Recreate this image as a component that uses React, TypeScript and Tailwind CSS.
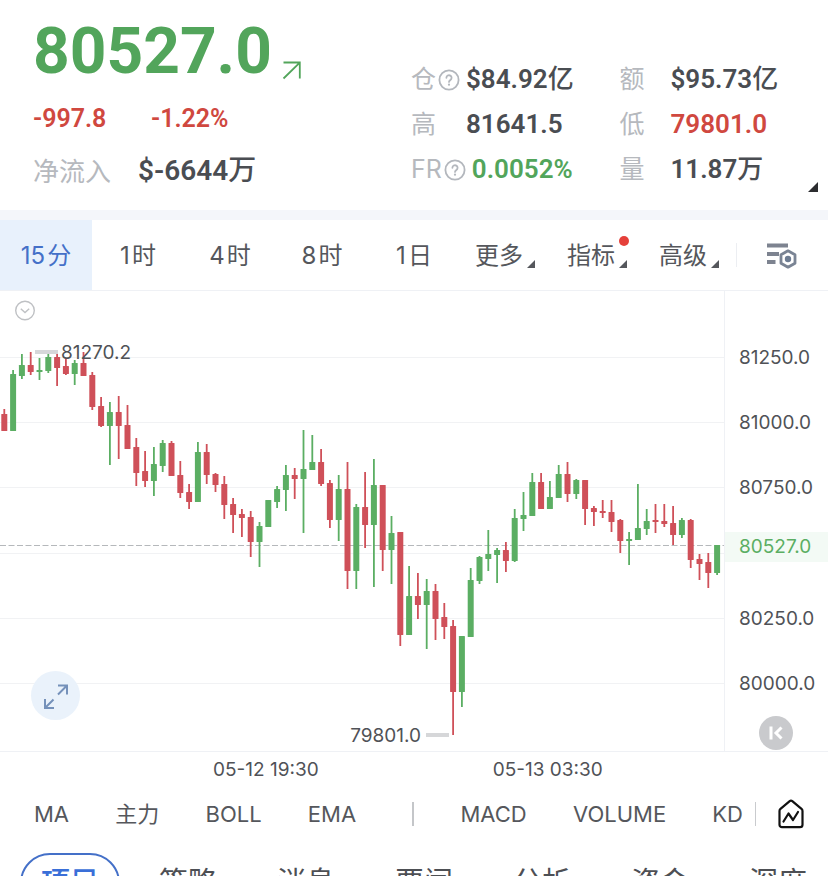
import React from 'react';

type Candle = [high: number, top: number, bottom: number, low: number, up: 0 | 1];

const CANDLES: Candle[] = [
  [409, 414, 431, 431, 0], [370, 374, 431, 431, 1], [354, 365, 376, 379, 1], [352, 365, 372, 375, 0],
  [358, 370, 372, 380, 1], [353, 357, 371, 373, 1], [352, 357, 368, 386, 0], [359, 366, 374, 375, 0],
  [360, 363, 374, 385, 1], [352, 363, 376, 376, 0], [372, 375, 407, 410, 0], [397, 406, 426, 427, 0],
  [402, 412, 426, 465, 1], [396, 412, 426, 459, 0], [405, 425, 449, 449, 0], [438, 447, 473, 486, 0],
  [451, 471, 481, 487, 0], [447, 464, 481, 496, 1], [440, 443, 466, 472, 1], [441, 443, 476, 476, 0],
  [461, 475, 493, 498, 0], [484, 492, 502, 509, 0], [442, 452, 502, 502, 1], [444, 452, 475, 484, 0],
  [473, 474, 485, 492, 0], [476, 484, 505, 519, 0], [498, 504, 515, 533, 0], [509, 514, 518, 537, 0],
  [511, 517, 542, 557, 0], [522, 526, 542, 567, 1], [500, 500, 527, 527, 1], [486, 489, 502, 508, 1],
  [465, 475, 490, 511, 1], [468, 475, 479, 499, 0], [430, 469, 479, 533, 1], [435, 462, 470, 470, 1],
  [449, 462, 484, 486, 0], [480, 483, 520, 528, 0], [475, 489, 520, 541, 1], [462, 489, 571, 589, 0],
  [504, 507, 571, 589, 1], [472, 507, 525, 548, 0], [459, 485, 525, 587, 1], [485, 485, 550, 571, 0],
  [516, 533, 550, 584, 1], [532, 532, 635, 646, 0], [566, 596, 635, 635, 1], [573, 596, 605, 619, 0],
  [579, 591, 605, 649, 1], [584, 591, 619, 640, 0], [603, 617, 627, 639, 0], [620, 626, 692, 735, 0],
  [636, 636, 692, 707, 1], [568, 580, 637, 637, 1], [556, 557, 581, 584, 1], [530, 554, 559, 571, 1],
  [548, 550, 555, 583, 1], [542, 550, 561, 572, 0], [509, 518, 561, 562, 1], [492, 515, 519, 531, 1],
  [473, 482, 516, 516, 1], [473, 482, 509, 509, 0], [481, 497, 509, 509, 1], [465, 474, 498, 498, 1],
  [462, 474, 494, 502, 0], [479, 480, 494, 499, 1], [480, 480, 509, 525, 0], [506, 508, 512, 526, 0],
  [500, 511, 513, 518, 0], [500, 512, 522, 532, 0], [519, 520, 541, 553, 0], [532, 539, 541, 565, 1],
  [484, 528, 540, 540, 1], [509, 521, 529, 535, 1], [504, 520, 522, 533, 0], [504, 521, 524, 527, 0],
  [506, 523, 535, 545, 0], [518, 520, 535, 538, 1], [519, 520, 560, 568, 0], [554, 559, 564, 580, 0],
  [553, 562, 573, 588, 0], [545, 545, 573, 575, 1],
];

const GRID_LINES = [357, 422, 487, 553, 618, 683];

const PERIODS = [
  { num: '15', unit: '分', active: true },
  { num: '1', unit: '时' },
  { num: '4', unit: '时' },
  { num: '8', unit: '时' },
  { num: '1', unit: '日' },
];

const MENUS = [
  { label: '更多' },
  { label: '指标', dot: true },
  { label: '高级' },
];

const MAIN_INDICATORS = ['MA', '主力', 'BOLL', 'EMA'];
const SUB_INDICATORS = ['MACD', 'VOLUME', 'KD'];
const SECTIONS = ['项目', '策略', '消息', '要闻', '分析', '资金', '深度'];

const HelpIcon = () => (
  <svg className="h-[22px] w-[22px] shrink-0" viewBox="0 0 22 22" fill="none" stroke="#b3b7bd" strokeWidth="1.8" strokeLinecap="round">
    <circle cx="11" cy="11" r="9.6" />
    <path d="M8.4 8.8a2.6 2.6 0 1 1 3.9 2.3c-.9.5-1.3.9-1.3 1.8" />
    <path d="M11 15.6v.1" strokeWidth="2.2" />
  </svg>
);

const Corner = ({ className }: { className: string }) => (
  <svg className={className} viewBox="0 0 10 10" fill="currentColor">
    <path d="M10 0v10H0z" />
  </svg>
);

interface StatProps {
  label: string;
  value: string;
  unit?: string;
  help?: boolean;
  labelClass: string;
  valueClass?: string;
}

const Stat: React.FC<StatProps> = ({ label, value, unit, help, labelClass, valueClass = 'text-[#4a4d52]' }) => (
  <div className="flex h-[45px] items-center whitespace-nowrap">
    <dt className={`flex shrink-0 items-center gap-0.5 text-[25px] text-[#b6b9be] ${labelClass}`}>
      {label}
      {help && <HelpIcon />}
    </dt>
    <dd className={`flex items-center font-[Roboto,'Noto_Sans_CJK_SC',sans-serif] text-[26px] font-semibold ${valueClass}`}>
      {value}
      {unit && <span className="font-medium">{unit}</span>}
    </dd>
  </div>
);

const Header = () => (
  <header className="relative flex h-[210px]">
    <div className="w-[411px] shrink-0 pl-[33px] pt-5">
      <div className="flex items-end gap-2.5 text-[#52a55b]">
        <span className="font-[Roboto,sans-serif] text-[64px] font-bold leading-[64px]">80527.0</span>
        <svg className="mb-1 h-5 w-5" viewBox="0 0 20 20" fill="none" stroke="currentColor" strokeWidth="1.8">
          <path d="M1.500 2.500h16.300v16M17.500 2.800 1.500 18.500" />
        </svg>
      </div>
      <div className="mt-[19px] flex h-8 items-center font-[Roboto,sans-serif] text-[25px] font-semibold text-[#d0483f]">
        <span className="w-[118px]">-997.8</span>
        <span>-1.22%</span>
      </div>
      <div className="mt-4 flex h-10 items-center">
        <span className="w-[105px] text-[26px] text-[#b6b9be]">净流入</span>
        <span className="font-[Roboto,'Noto_Sans_CJK_SC',sans-serif] text-[28px] font-semibold text-[#4a4d52]">
          $-6644<span className="font-medium">万</span>
        </span>
      </div>
    </div>
    <dl className="grid flex-1 grid-cols-2 content-start pt-[57px]">
      <Stat label="仓" help value="$84.92" unit="亿" labelClass="w-[55px]" />
      <Stat label="额" value="$95.73" unit="亿" labelClass="w-[51px]" />
      <Stat label="高" value="81641.5" labelClass="w-[55px]" />
      <Stat label="低" value="79801.0" labelClass="w-[51px]" valueClass="text-[#d0483f]" />
      <Stat label="FR" help value="0.0052%" labelClass="pr-1.5" valueClass="text-[#52a55b]" />
      <Stat label="量" value="11.87" unit="万" labelClass="w-[51px]" />
    </dl>
    <Corner className="absolute bottom-[18px] right-2.5 h-2.5 w-2.5 text-[#2c2d30]" />
  </header>
);

const PeriodBar = () => (
  <nav className="grid h-[71px] grid-cols-9 border-b border-[#eff1f5] text-2xl text-[#55575c]">
    {PERIODS.map((p) => (
      <button
        key={p.num + p.unit}
        className={`flex items-center justify-center gap-0.5 pt-0.5 ${p.active ? 'bg-[#e8f1fc] text-[#4470c8]' : ''}`}
      >
        <span>{p.num}</span>
        <span>{p.unit}</span>
      </button>
    ))}
    {MENUS.map((m) => (
      <button key={m.label} className="flex items-center justify-center gap-1 pr-0.5 pt-0.5">
        <span className="relative">
          {m.label}
          {m.dot && <i className="absolute -right-3.5 -top-1 h-2.5 w-2.5 rounded-full bg-[#e5403a]" />}
        </span>
        <Corner className="mt-4 h-2 w-2" />
      </button>
    ))}
    <button aria-label="图表设置" className="flex items-center">
      <span className="h-6 w-px bg-[#eceef2]" />
      <svg className="ml-7 h-[30px] w-[34px]" viewBox="0 0 34 30" fill="none">
        <path d="M2 5.500h21M2 14h12M2 22h8.500" stroke="#7d8390" strokeWidth="4" />
        <path d="M23 10.800l7 4v8.400l-7 4-7-4v-8.400z" stroke="#7a8494" strokeWidth="2.800" strokeLinejoin="round" />
        <circle cx="23" cy="19" r="3.200" fill="#6d7c92" />
      </svg>
    </button>
  </nav>
);

const CandleChart = () => (
  <svg className="block w-full" viewBox="0 291 724 460">
    {GRID_LINES.map((y) => (
      <path key={y} d={`M0 ${y + 0.5}H724`} stroke="#f1f2f4" />
    ))}
    <path d="M0 545.5H724" stroke="#b5b8bb" strokeDasharray="6 2.5" />
    {CANDLES.map(([high, top, bottom, low, up], i) => {
      const x = 4.3 + i * 8.8;
      return (
        <g key={i} fill={up ? '#5bae63' : '#cf5059'}>
          <rect x={x - 0.9} y={high} width="1.8" height={low - high} />
          <rect x={x - 3} y={top} width="6" height={bottom - top} rx="0.5" />
        </g>
      );
    })}
    <path d="M35 352H58M426 735H449" stroke="#d6d7d9" strokeWidth="4" />
    <g className="font-[Inter,sans-serif] text-[19px]" fill="#505257">
      <text x="61" y="359">81270.2</text>
      <text x="421" y="742" textAnchor="end">79801.0</text>
    </g>
  </svg>
);

const PriceAxis = () => (
  <div className="relative flex flex-col border-l border-[#eff1f5] pb-[52px] pt-[52px] text-[19px] text-[#505257]">
    <ul className="flex flex-1 flex-col justify-between pl-3.5 leading-[30px]">
      <li>81250.0</li>
      <li>81000.0</li>
      <li>80750.0</li>
      <li className="invisible">80500.0</li>
      <li>80250.0</li>
      <li>80000.0</li>
    </ul>
    <span className="absolute inset-x-0 top-[241px] bg-[#f3faf5] pl-3.5 leading-[30px] text-[#5bae63]">80527.0</span>
    <button aria-label="回到最新" className="absolute bottom-px left-[34px] h-[34px] w-[34px] rounded-full bg-[#c9cacd]">
      <svg viewBox="0 0 34 34" fill="none" stroke="#fff" strokeWidth="3">
        <path d="M12 10.500v13M22.500 11.500l-5.500 5.500 5.500 5.500" />
      </svg>
    </button>
  </div>
);

const ChartPanel = () => (
  <section>
    <div className="relative grid grid-cols-[1fr_104px] border-b border-[#eff1f5]">
      <CandleChart />
      <PriceAxis />
      <button aria-label="收起" className="absolute left-3.5 top-2 h-[22px] w-[22px]">
        <svg viewBox="0 0 22 22" fill="none" stroke="#bfc1c4" strokeWidth="1.4">
          <circle cx="11" cy="11.500" r="9.300" />
          <path d="M6.800 9.800l4.200 3.800 4.200-3.800" />
        </svg>
      </button>
      <button aria-label="全屏" className="absolute bottom-[31px] left-[31px] h-[49px] w-[49px] rounded-full bg-[#eaf2fb]">
        <svg viewBox="0 0 49 49" fill="none" stroke="#7591ba" strokeWidth="2">
          <path d="M27 14.500h9v9M36 14.500l-9 9M14 28v9h9M14 37l8.500-8.500" />
        </svg>
      </button>
    </div>
    <div className="flex h-[37px] items-center gap-[174px] pl-[213px] text-[19px] text-[#505257]">
      <time>05-12 19:30</time>
      <time>05-13 03:30</time>
    </div>
  </section>
);

const IndicatorBar = () => (
  <div className="flex h-[50px] items-center text-[22px] text-[#55575c]">
    <div className="flex flex-1 items-center justify-between pl-[34px] pr-3">
      {MAIN_INDICATORS.map((name) => (
        <button key={name}>{name}</button>
      ))}
      <span className="ml-2.5 h-6 w-0.5 bg-[#c4c6c9]" />
      {SUB_INDICATORS.map((name) => (
        <button key={name}>{name}</button>
      ))}
    </div>
    <button aria-label="指标管理" className="flex w-[73px] items-center">
      <span className="h-6 w-px bg-[#c9cbce]" />
      <svg className="ml-[21px] h-[30px] w-[28px]" viewBox="0 0 28 30" fill="none" stroke="#111" strokeWidth="2.200" strokeLinejoin="round" strokeLinecap="round">
        <path d="M12.700 2.200a2 2 0 0 1 2.600 0l9.200 7.600a3 3 0 0 1 1 2.300v13.600a2.500 2.500 0 0 1-2.500 2.500H5a2.500 2.500 0 0 1-2.500-2.500V12.100a3 3 0 0 1 1-2.300z" />
        <path d="M6.500 22.500l5-8 4.500 6.500 5-8" />
      </svg>
    </button>
  </div>
);

const SectionTabs = () => (
  <nav className="mt-3.5 flex justify-between pl-5 text-[29px] text-[#4d4f54]">
    {SECTIONS.map((name, i) => (
      <button
        key={name}
        className={`h-[60px] w-[100px] shrink-0 whitespace-nowrap rounded-[30px] border-2 ${i === 0 ? 'border-[#4470c8] font-medium text-[#3a6fd8]' : 'border-transparent'}`}
      >
        {name}
      </button>
    ))}
  </nav>
);

export default function App() {
  return (
    <main className="h-screen overflow-hidden bg-white font-[Inter,'Noto_Sans_CJK_SC',sans-serif]">
      <Header />
      <div className="h-2.5 bg-[#f4f6fa]" />
      <PeriodBar />
      <ChartPanel />
      <IndicatorBar />
      <SectionTabs />
    </main>
  );
}
